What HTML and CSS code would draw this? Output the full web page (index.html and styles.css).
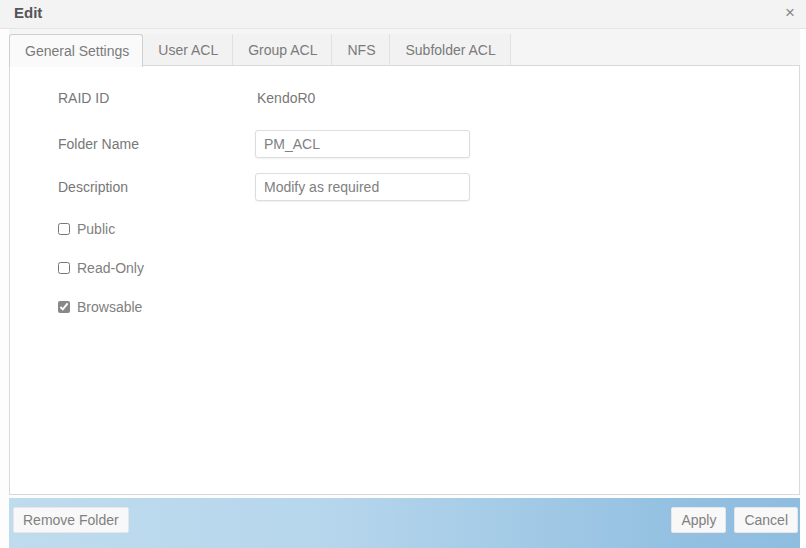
FILE: index.html
```html
<!DOCTYPE html>
<html lang="en">
<head>
    <meta charset="UTF-8">
    <title>Edit</title>
    <link rel="stylesheet" href="styles.css">
</head>
<body>
    <div class="window">
        <div class="titlebar">
            <span class="title">Edit</span>
            <span class="close">&#215;</span>
        </div>
        <div class="body">
            <ul class="tabs">
                <li class="tab active">General Settings</li>
                <li class="tab">User ACL</li>
                <li class="tab">Group ACL</li>
                <li class="tab">NFS</li>
                <li class="tab">Subfolder ACL</li>
            </ul>
            <div class="panel">
                <div class="form-row plain">
                    <span class="label">RAID ID</span>
                    <span class="value">KendoR0</span>
                </div>
                <div class="form-row">
                    <label class="label" for="folderName">Folder Name</label>
                    <input class="field" type="text" id="folderName" value="PM_ACL">
                </div>
                <div class="form-row">
                    <label class="label" for="description">Description</label>
                    <input class="field" type="text" id="description" value="Modify as required">
                </div>
                <label class="check"><input type="checkbox"> Public</label>
                <label class="check"><input type="checkbox"> Read-Only</label>
                <label class="check"><input type="checkbox" checked> Browsable</label>
            </div>
            <div class="footer">
                <button class="btn">Remove Folder</button>
                <div class="footer-right">
                    <button class="btn">Apply</button>
                    <button class="btn">Cancel</button>
                </div>
            </div>
        </div>
    </div>
</body>
</html>
```

FILE: styles.css
```css
body {
    margin: 0;
    font-family: "Liberation Sans", Arial, sans-serif;
    background-color: #fdfdfd;
    color: #777;
}
.window {
    width: 806px;
    height: 548px;
    overflow: hidden;
}
.titlebar {
    height: 29px;
    display: flex;
    align-items: center;
    justify-content: space-between;
    padding: 0 11px 3px 14px;
    background-color: #f3f3f3;
    border-bottom: 1px solid #e4e4e4;
    box-sizing: border-box;
}
.title {
    font-size: 15px;
    font-weight: bold;
    color: #555;
}
.close {
    font-size: 17px;
    color: #888;
}
.body {
    padding: 0 6px 0 9px;
}
.tabs {
    display: flex;
    list-style: none;
    margin: 0;
    padding: 5px 0 0 0;
    height: 37px;
    box-sizing: border-box;
    background-color: #f5f5f5;
    border-bottom: 1px solid #d9d9d9;
}
.tab {
    height: 31px;
    line-height: 32px;
    padding: 0 14px 0 15px;
    font-size: 14px;
    color: #7a7a7a;
    border-right: 1px solid #e1e1e1;
    background-color: #f2f2f2;
}
.tab.active {
    background-color: #fafafa;
    border: 1px solid #cfcfcf;
    border-bottom: none;
    border-radius: 3px 3px 0 0;
    padding: 0 13px 0 15px;
    height: 32px;
}
.panel {
    height: 429px;
    background-color: #fff;
    border: 1px solid #d9d9d9;
    border-top: none;
    padding: 20px 0 0 48px;
    box-sizing: border-box;
}
.form-row {
    display: flex;
    align-items: center;
    height: 27px;
    margin-bottom: 16px;
}
.form-row.plain {
    height: 24px;
    margin-bottom: 20px;
}
.label {
    width: 195px;
    font-size: 14px;
    color: #777;
}
.value {
    font-size: 14px;
    color: #777;
    padding-left: 4px;
}
.field {
    width: 215px;
    height: 28px;
    box-sizing: border-box;
    border: 1px solid #ddd;
    border-radius: 3px;
    padding: 0 8px;
    margin-left: 2px;
    font-family: inherit;
    font-size: 14px;
    color: #808080;
    box-shadow: 0 1px 2px rgba(0, 0, 0, 0.06);
}
.check {
    display: flex;
    align-items: center;
    height: 20px;
    margin-bottom: 19px;
    font-size: 14px;
    color: #808080;
}
.check:first-of-type {
    margin-top: 19px;
}
.check input {
    margin: 0 7px 0 0;
    width: 12px;
    height: 12px;
    accent-color: #888;
}
.footer {
    height: 50px;
    margin-top: 3px;
    display: flex;
    align-items: flex-start;
    justify-content: space-between;
    padding: 9px 2px 0 4px;
    box-sizing: border-box;
    background: linear-gradient(to right, #bfdcee, #b6d6ec 40%, #93c0e1 85%, #8fbde0);
}
.footer-right {
    display: flex;
    gap: 8px;
}
.btn {
    height: 26px;
    padding: 0 9px;
    font-family: inherit;
    font-size: 14px;
    color: #808080;
    background-color: #f8f8f8;
    border: 1px solid #e6e6e6;
    border-radius: 2px;
}
```
